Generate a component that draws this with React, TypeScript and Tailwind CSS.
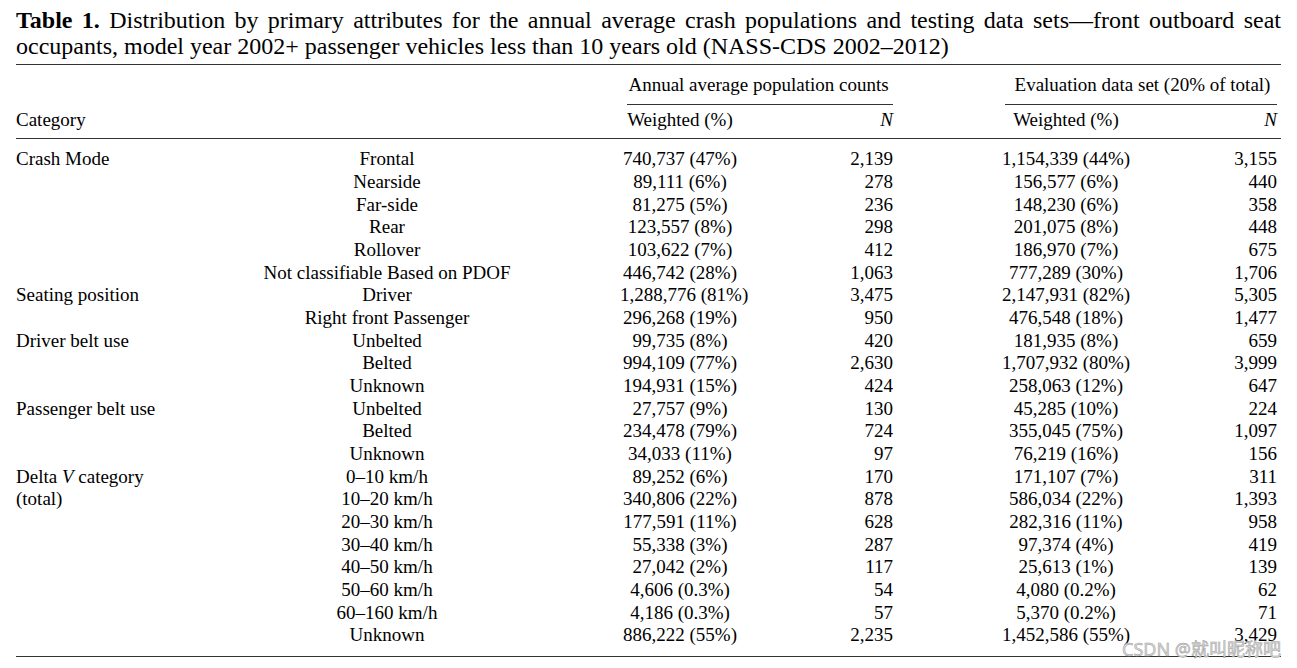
import React from "react";

type Row = { cat?: React.ReactNode; sub: string; w1: string; n1: string; w2: string; n2: string };

const rows: Row[] = [
  { cat: "Crash Mode", sub: "Frontal", w1: "740,737 (47%)", n1: "2,139", w2: "1,154,339 (44%)", n2: "3,155" },
  { sub: "Nearside", w1: "89,111 (6%)", n1: "278", w2: "156,577 (6%)", n2: "440" },
  { sub: "Far-side", w1: "81,275 (5%)", n1: "236", w2: "148,230 (6%)", n2: "358" },
  { sub: "Rear", w1: "123,557 (8%)", n1: "298", w2: "201,075 (8%)", n2: "448" },
  { sub: "Rollover", w1: "103,622 (7%)", n1: "412", w2: "186,970 (7%)", n2: "675" },
  { sub: "Not classifiable Based on PDOF", w1: "446,742 (28%)", n1: "1,063", w2: "777,289 (30%)", n2: "1,706" },
  { cat: "Seating position", sub: "Driver", w1: "1,288,776 (81%)", n1: "3,475", w2: "2,147,931 (82%)", n2: "5,305" },
  { sub: "Right front Passenger", w1: "296,268 (19%)", n1: "950", w2: "476,548 (18%)", n2: "1,477" },
  { cat: "Driver belt use", sub: "Unbelted", w1: "99,735 (8%)", n1: "420", w2: "181,935 (8%)", n2: "659" },
  { sub: "Belted", w1: "994,109 (77%)", n1: "2,630", w2: "1,707,932 (80%)", n2: "3,999" },
  { sub: "Unknown", w1: "194,931 (15%)", n1: "424", w2: "258,063 (12%)", n2: "647" },
  { cat: "Passenger belt use", sub: "Unbelted", w1: "27,757 (9%)", n1: "130", w2: "45,285 (10%)", n2: "224" },
  { sub: "Belted", w1: "234,478 (79%)", n1: "724", w2: "355,045 (75%)", n2: "1,097" },
  { sub: "Unknown", w1: "34,033 (11%)", n1: "97", w2: "76,219 (16%)", n2: "156" },
  {
    cat: (
      <>
        Delta <i>V</i> category
      </>
    ),
    sub: "0–10 km/h",
    w1: "89,252 (6%)",
    n1: "170",
    w2: "171,107 (7%)",
    n2: "311",
  },
  { cat: "(total)", sub: "10–20 km/h", w1: "340,806 (22%)", n1: "878", w2: "586,034 (22%)", n2: "1,393" },
  { sub: "20–30 km/h", w1: "177,591 (11%)", n1: "628", w2: "282,316 (11%)", n2: "958" },
  { sub: "30–40 km/h", w1: "55,338 (3%)", n1: "287", w2: "97,374 (4%)", n2: "419" },
  { sub: "40–50 km/h", w1: "27,042 (2%)", n1: "117", w2: "25,613 (1%)", n2: "139" },
  { sub: "50–60 km/h", w1: "4,606 (0.3%)", n1: "54", w2: "4,080 (0.2%)", n2: "62" },
  { sub: "60–160 km/h", w1: "4,186 (0.3%)", n1: "57", w2: "5,370 (0.2%)", n2: "71" },
  { sub: "Unknown", w1: "886,222 (55%)", n1: "2,235", w2: "1,452,586 (55%)", n2: "3,429" },
];

const cols = "grid grid-cols-[242px_258px_104px_120px_153px_107px_132px_145px]";

export default function App() {
  return (
    <div className="relative w-[1297px] h-[668px] bg-white text-black font-['Liberation_Serif',serif] px-[16px] pt-[7px]">
      <div className="text-[24px] leading-[26px] whitespace-nowrap">
        <p className="text-justify [text-align-last:justify]">
          <b>Table 1.</b> Distribution by primary attributes for the annual average crash populations and testing
          data sets—front outboard seat
        </p>
        <p>occupants, model year 2002+ passenger vehicles less than 10 years old (NASS-CDS 2002–2012)</p>
      </div>

      <div className="mt-[5px] border-t-[1.5px] border-[#333] text-[19px] leading-[22.67px]">
        {/* header */}
        <div className={cols}>
          <div className="col-span-3 row-span-2 self-end pb-[7px]">Category</div>
          <div className="col-span-2 pt-[9px]">
            <div className="text-center pl-[4px]">Annual average population counts</div>
            <div className="ml-[7px] mt-[7px] border-t-[1.5px] border-[#333]" />
          </div>
          <div className="col-start-7 col-span-2 row-start-1 pt-[9px]">
            <div className="text-center pl-[8px]">Evaluation data set (20% of total)</div>
            <div className="ml-[5px] mt-[7px] border-t-[1.5px] border-[#333]" />
          </div>
          <div className="col-start-4 row-start-2 text-center pt-[4px] pb-[7px]">Weighted (%)</div>
          <div className="col-start-5 row-start-2 text-right italic pt-[4px] pb-[7px]">N</div>
          <div className="col-start-7 row-start-2 text-center pt-[4px] pb-[7px]">Weighted (%)</div>
          <div className="col-start-8 row-start-2 text-right italic pt-[4px] pb-[7px]">N</div>
        </div>

        {/* body */}
        <div className="border-t-[1.5px] border-[#333] pt-[9px] pb-[9px] border-b-[1.5px]">
          {rows.map((r, i) => (
            <div key={i} className={`${cols} whitespace-nowrap`}>
              <div>{r.cat}</div>
              <div className="text-center">{r.sub}</div>
              <div />
              <div className="text-center">{r.w1}</div>
              <div className="text-right">{r.n1}</div>
              <div />
              <div className="text-center">{r.w2}</div>
              <div className="text-right">{r.n2}</div>
            </div>
          ))}
        </div>
      </div>

      <div className="absolute right-[16px] top-[638px] text-[18px] leading-[22px] text-[#dcdcdc] font-['Noto_Sans','Noto_Sans_CJK_SC',sans-serif] [-webkit-text-stroke:0.5px_#9a9a9a]">
        CSDN @就叫昵称吧
      </div>
    </div>
  );
}
